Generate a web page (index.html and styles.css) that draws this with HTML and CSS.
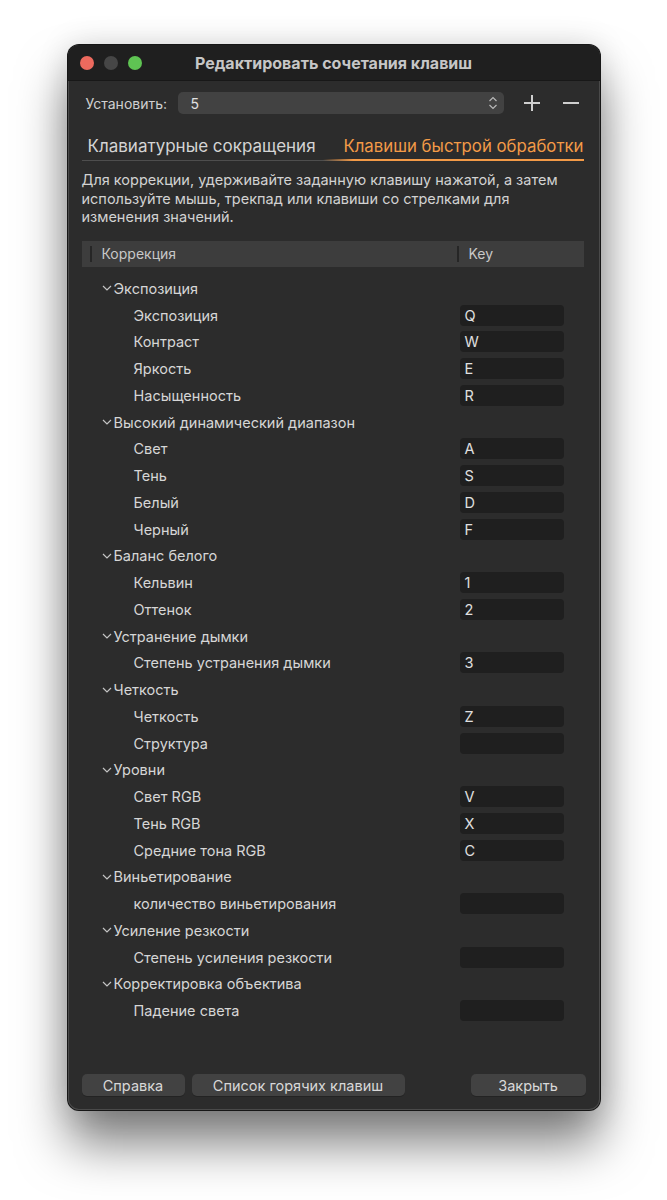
FILE: index.html
```html
<!DOCTYPE html>
<html lang="ru">
<head>
    <meta charset="UTF-8">
    <title>Редактировать сочетания клавиш</title>
    <link rel="stylesheet" href="styles.css">
</head>
<body>
    <div class="window">
        <div class="titlebar">
            <div class="lights">
                <span class="light red"></span>
                <span class="light gray"></span>
                <span class="light green"></span>
            </div>
            <div class="title">Редактировать сочетания клавиш</div>
        </div>

        <div class="content">
            <div class="set-row">
                <span class="set-label">Установить:</span>
                <div class="select">
                    <span>5</span>
                    <svg class="updown" width="10" height="16" viewBox="0 0 10 16">
                        <polyline points="1.5,6 5,2.5 8.5,6" />
                        <polyline points="1.5,10 5,13.5 8.5,10" />
                    </svg>
                </div>
                <svg class="tool" width="18" height="18" viewBox="0 0 18 18">
                    <line x1="9" y1="1" x2="9" y2="17" />
                    <line x1="1" y1="9" x2="17" y2="9" />
                </svg>
                <svg class="tool" width="18" height="18" viewBox="0 0 18 18">
                    <line x1="1" y1="9" x2="17" y2="9" />
                </svg>
            </div>

            <div class="tabs">
                <div class="tab">Клавиатурные сокращения</div>
                <div class="tab active">Клавиши быстрой обработки</div>
            </div>

            <p class="hint">Для коррекции, удерживайте заданную клавишу нажатой, а затем используйте мышь, трекпад или клавиши со стрелками для изменения значений.</p>

            <div class="table-head">
                <div class="col-name">Коррекция</div>
                <div class="col-key">Key</div>
            </div>

            <div class="rows">
                <div class="row group"><svg class="chev" width="10" height="6" viewBox="0 0 10 6"><polyline points="1,1 5,5 9,1" /></svg>Экспозиция</div>
                <div class="row item"><span>Экспозиция</span><span class="key">Q</span></div>
                <div class="row item"><span>Контраст</span><span class="key">W</span></div>
                <div class="row item"><span>Яркость</span><span class="key">E</span></div>
                <div class="row item"><span>Насыщенность</span><span class="key">R</span></div>

                <div class="row group"><svg class="chev" width="10" height="6" viewBox="0 0 10 6"><polyline points="1,1 5,5 9,1" /></svg>Высокий динамический диапазон</div>
                <div class="row item"><span>Свет</span><span class="key">A</span></div>
                <div class="row item"><span>Тень</span><span class="key">S</span></div>
                <div class="row item"><span>Белый</span><span class="key">D</span></div>
                <div class="row item"><span>Черный</span><span class="key">F</span></div>

                <div class="row group"><svg class="chev" width="10" height="6" viewBox="0 0 10 6"><polyline points="1,1 5,5 9,1" /></svg>Баланс белого</div>
                <div class="row item"><span>Кельвин</span><span class="key">1</span></div>
                <div class="row item"><span>Оттенок</span><span class="key">2</span></div>

                <div class="row group"><svg class="chev" width="10" height="6" viewBox="0 0 10 6"><polyline points="1,1 5,5 9,1" /></svg>Устранение дымки</div>
                <div class="row item"><span>Степень устранения дымки</span><span class="key">3</span></div>

                <div class="row group"><svg class="chev" width="10" height="6" viewBox="0 0 10 6"><polyline points="1,1 5,5 9,1" /></svg>Четкость</div>
                <div class="row item"><span>Четкость</span><span class="key">Z</span></div>
                <div class="row item"><span>Структура</span><span class="key"></span></div>

                <div class="row group"><svg class="chev" width="10" height="6" viewBox="0 0 10 6"><polyline points="1,1 5,5 9,1" /></svg>Уровни</div>
                <div class="row item"><span>Свет RGB</span><span class="key">V</span></div>
                <div class="row item"><span>Тень RGB</span><span class="key">X</span></div>
                <div class="row item"><span>Средние тона RGB</span><span class="key">C</span></div>

                <div class="row group"><svg class="chev" width="10" height="6" viewBox="0 0 10 6"><polyline points="1,1 5,5 9,1" /></svg>Виньетирование</div>
                <div class="row item"><span>количество виньетирования</span><span class="key"></span></div>

                <div class="row group"><svg class="chev" width="10" height="6" viewBox="0 0 10 6"><polyline points="1,1 5,5 9,1" /></svg>Усиление резкости</div>
                <div class="row item"><span>Степень усиления резкости</span><span class="key"></span></div>

                <div class="row group"><svg class="chev" width="10" height="6" viewBox="0 0 10 6"><polyline points="1,1 5,5 9,1" /></svg>Корректировка объектива</div>
                <div class="row item"><span>Падение света</span><span class="key"></span></div>
            </div>

            <div class="footer">
                <button class="btn btn-help">Справка</button>
                <button class="btn btn-list">Список горячих клавиш</button>
                <button class="btn btn-close">Закрыть</button>
            </div>
        </div>
    </div>
</body>
</html>
```

FILE: styles.css
```css
body {
    margin: 0;
    min-height: 1200px;
    background-color: #ffffff;
    font-family: Inter, "Noto Sans", sans-serif;
    color: #d6d6d6;
}

.window {
    width: 532px;
    height: 1065px;
    margin: 45px auto 0;
    background-color: #2c2c2c;
    border-radius: 11px;
    overflow: hidden;
    display: flex;
    flex-direction: column;
    box-shadow: 0 0 0 1px #161616, inset 0 0 0 1px #4a4a4a, 0 34px 50px rgba(0, 0, 0, 0.5), 0 0 32px rgba(0, 0, 0, 0.14);
}

.titlebar {
    height: 35px;
    flex-shrink: 0;
    background-color: #1f1f1f;
    display: flex;
    align-items: center;
    position: relative;
    border-bottom: 1px solid #181818;
}

.lights {
    display: flex;
    gap: 10px;
    padding-left: 12px;
}

.light {
    width: 14px;
    height: 14px;
    border-radius: 50%;
}

.light.red { background-color: #ed6a5e; }
.light.gray { background-color: #464646; }
.light.green { background-color: #5fc453; }

.title {
    position: absolute;
    left: 0;
    right: 0;
    text-align: center;
    font-size: 16px;
    font-weight: 700;
    color: #c6c6c6;
    pointer-events: none;
}

.content {
    flex: 1;
    display: flex;
    flex-direction: column;
    padding: 0 16px 14px 14px;
}

.set-row {
    display: flex;
    align-items: center;
    height: 22px;
    margin-top: 11px;
    padding-left: 4px;
}

.set-label {
    font-size: 14px;
    color: #d0d0d0;
    width: 92px;
}

.select {
    width: 326px;
    height: 22px;
    background-color: #424242;
    border-radius: 5px;
    display: flex;
    align-items: center;
    justify-content: space-between;
    padding: 0 6px 0 13px;
    box-sizing: border-box;
    font-size: 14px;
    color: #e0e0e0;
}

.updown polyline {
    fill: none;
    stroke: #b8b8b8;
    stroke-width: 1.2;
}

.tool {
    margin-left: 19px;
}

.tool + .tool {
    margin-left: 21px;
}

.tool line {
    stroke: #cfcfcf;
    stroke-width: 2;
}

.tabs {
    display: flex;
    margin-top: 22px;
    border-bottom: 1px solid #4e4e4e;
}

.tab {
    font-size: 17px;
    color: #d4d4d4;
    padding: 0 0 4px 6px;
    width: 239px;
    white-space: nowrap;
}

.tab.active {
    flex: 1;
    width: auto;
    padding-left: 20px;
    color: #f39a47;
    font-size: 16.8px;
    position: relative;
}

.tab.active::after {
    content: "";
    position: absolute;
    left: 0;
    right: 0;
    bottom: -1px;
    height: 2px;
    background: linear-gradient(to right, rgba(243, 154, 71, 0) 0, #f39a47 30px, #f39a47 100%);
}

.hint {
    margin: 10px 0 0;
    font-size: 14.5px;
    line-height: 18.5px;
    color: #d2d2d2;
}

.table-head {
    margin-top: 14px;
    height: 26px;
    background-color: #3d3d3d;
    display: flex;
    align-items: center;
    font-size: 14px;
    color: #c8c8c8;
}

.col-name,
.col-key {
    position: relative;
    height: 100%;
    display: flex;
    align-items: center;
}

.col-name::before,
.col-key::before {
    content: "";
    position: absolute;
    left: 0;
    top: 5px;
    bottom: 5px;
    width: 2px;
    background-color: #262626;
}

.col-name {
    margin-left: 8px;
    padding-left: 12px;
    width: 355px;
}

.col-key {
    padding-left: 12px;
}

.rows {
    margin-top: 8.5px;
    font-size: 14.5px;
    color: #d6d6d6;
}

.row {
    height: 26.75px;
    display: flex;
    align-items: center;
}

.row.group {
    padding-left: 20px;
}

.chev {
    margin-right: 2px;
}

.chev polyline {
    fill: none;
    stroke: #c4c4c4;
    stroke-width: 1.2;
}

.row.item {
    padding-left: 52px;
    justify-content: space-between;
    padding-right: 20px;
}

.key {
    width: 104px;
    height: 21px;
    background-color: #1f1f1f;
    border-radius: 4px;
    box-sizing: border-box;
    padding-left: 5px;
    display: flex;
    align-items: center;
    color: #e0e0e0;
}

.footer {
    margin-top: auto;
    display: flex;
    gap: 7px;
}

.btn {
    height: 22px;
    border: none;
    border-radius: 5px;
    background-color: #424242;
    color: #d8d8d8;
    font-family: Inter, "Noto Sans", sans-serif;
    font-size: 14.5px;
    padding: 0;
    box-shadow: 0 1px 0 rgba(0, 0, 0, 0.2);
}

.btn-help { width: 103px; }
.btn-list { width: 213px; }
.btn-close {
    width: 115px;
    margin-left: auto;
    margin-right: -2px;
}
```
